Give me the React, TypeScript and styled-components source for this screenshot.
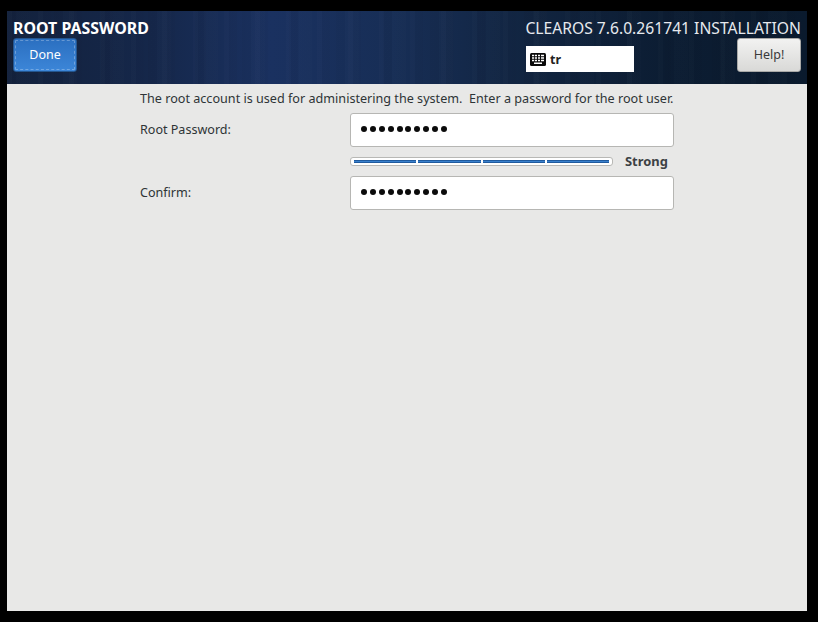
import styled, { createGlobalStyle } from "styled-components";

const GlobalStyle = createGlobalStyle`
  html, body {
    margin: 0;
    padding: 0;
    background: #000;
  }
  body {
    font-family: "Noto Sans", "Open Sans", sans-serif;
  }
`;

const Screen = styled.div`
  width: 818px;
  height: 622px;
  padding: 11px 11px 11px 7px;
  box-sizing: border-box;
  background: #000;
`;

const Window = styled.div`
  width: 800px;
  height: 600px;
  display: flex;
  flex-direction: column;
  background: #e8e8e7;
`;

const Header = styled.header`
  height: 73px;
  flex: none;
  display: flex;
  justify-content: space-between;
  padding: 7px 6px 0;
  box-sizing: border-box;
  background:
    repeating-linear-gradient(90deg, rgba(255, 255, 255, 0.012) 0 5px, rgba(0, 0, 0, 0.02) 5px 13px, rgba(255, 255, 255, 0) 13px 31px),
    repeating-linear-gradient(90deg, rgba(0, 0, 0, 0.025) 0 9px, rgba(255, 255, 255, 0.008) 9px 23px, rgba(0, 0, 0, 0) 23px 47px),
    linear-gradient(90deg, #13223d 0%, #15274a 18%, #1a3160 33%, #172e56 48%, #11243f 66%, #0c1d33 82%, #0a1a2d 100%);
`;

const LeftSide = styled.div`
  display: flex;
  flex-direction: column;
  align-items: flex-start;
`;

const RightSide = styled.div`
  display: flex;
  flex-direction: column;
  align-items: flex-end;
`;

const Title = styled.div`
  font-size: 15.9px;
  line-height: 20px;
  font-weight: 700;
  color: #fff;
`;

const Product = styled.div`
  font-size: 15.67px;
  line-height: 20px;
  color: #e6e9ee;
`;

const Button = styled.div<{ $primary?: boolean }>`
  width: 64px;
  height: 34px;
  display: flex;
  align-items: center;
  justify-content: center;
  padding-bottom: 2px;
  box-sizing: border-box;
  border-radius: 3px;
  font-size: 12.5px;
  border: 1px solid ${(p) => (p.$primary ? "#24568f" : "#a9a9a7")};
  color: ${(p) => (p.$primary ? "#fff" : "#3a3a3a")};
  background: ${(p) =>
    p.$primary ? "linear-gradient(#2b6fc0, #3c86d8)" : "linear-gradient(#f2f2f1, #d9d9d7)"};
  outline: ${(p) => (p.$primary ? "1px dashed rgba(255, 255, 255, 0.28)" : "none")};
  outline-offset: -3px;
`;

const ControlRow = styled.div`
  display: flex;
  align-items: flex-start;
  gap: 103px;
`;

const Layout = styled.div`
  width: 108px;
  height: 26px;
  margin-top: 8px;
  display: flex;
  align-items: center;
  gap: 4px;
  padding-left: 4px;
  box-sizing: border-box;
  background: #fff;
  font-size: 12.5px;
  font-weight: 700;
  color: #222;
`;

const Content = styled.main`
  width: 534px;
  margin-left: 133px;
  display: flex;
  flex-direction: column;
`;

const Intro = styled.p`
  margin: 0;
  height: 29px;
  padding-top: 6px;
  box-sizing: border-box;
  font-size: 12.62px;
  line-height: 17px;
  color: #2e3436;
  white-space: pre;
`;

const Row = styled.div`
  display: grid;
  grid-template-columns: 210px 324px;
  align-items: center;
`;

const Label = styled.label`
  padding-bottom: 2px;
  font-size: 12.55px;
  color: #2e3436;
`;

const Field = styled.div`
  height: 34px;
  box-sizing: border-box;
  display: flex;
  align-items: center;
  gap: 2.9px;
  padding: 0 10px 2px;
  background: #fff;
  border: 1px solid #b6b6b3;
  border-radius: 3px;
`;

const Dot = styled.span`
  width: 6px;
  height: 6px;
  border-radius: 50%;
  background: #0b0b0b;
`;

const StrengthRow = styled.div`
  height: 29px;
  margin-left: 210px;
  display: flex;
  align-items: center;
`;

const Meter = styled.div`
  width: 263px;
  height: 9px;
  box-sizing: border-box;
  display: grid;
  grid-template-columns: repeat(4, 1fr);
  gap: 2px;
  padding: 2px 3px;
  background: #fff;
  border: 1px solid #b8b8b5;
  border-radius: 3px;
`;

const Segment = styled.div`
  background: #3a80cc;
  border-top: 1px solid #1f5a9e;
  border-bottom: 1px solid #1f5a9e;
`;

const Strength = styled.span`
  margin-left: 12px;
  padding-bottom: 2px;
  font-size: 12.9px;
  font-weight: 700;
  color: #3c4144;
`;

function KeyboardIcon() {
  return (
    <svg width="16" height="13" viewBox="0 0 16 13">
      <rect width="16" height="13" rx="1.5" fill="#0a0a0a" />
      <path
        d="M2 2.5h2.2M5 2.5h2M8 2.5h2M11 2.5h3M2 5h2.2M5 5h2M8 5h2M11 5h3M2 7.5h2.2M5 7.5h2M8 7.5h2M11 7.5h3M4 10.3h8"
        stroke="#fff"
        strokeWidth="1.5"
      />
    </svg>
  );
}

function PasswordField() {
  return (
    <Field>
      {Array.from({ length: 10 }, (_, i) => (
        <Dot key={i} />
      ))}
    </Field>
  );
}

export default function App() {
  return (
    <>
      <GlobalStyle />
      <Screen>
        <Window>
          <Header>
            <LeftSide>
              <Title>ROOT PASSWORD</Title>
              <Button $primary>Done</Button>
            </LeftSide>
            <RightSide>
              <Product>CLEAROS 7.6.0.261741 INSTALLATION</Product>
              <ControlRow>
                <Layout>
                  <KeyboardIcon />
                  tr
                </Layout>
                <Button>Help!</Button>
              </ControlRow>
            </RightSide>
          </Header>
          <Content>
            <Intro>The root account is used for administering the system.  Enter a password for the root user.</Intro>
            <Row>
              <Label>Root Password:</Label>
              <PasswordField />
            </Row>
            <StrengthRow>
              <Meter>
                <Segment />
                <Segment />
                <Segment />
                <Segment />
              </Meter>
              <Strength>Strong</Strength>
            </StrengthRow>
            <Row>
              <Label>Confirm:</Label>
              <PasswordField />
            </Row>
          </Content>
        </Window>
      </Screen>
    </>
  );
}
